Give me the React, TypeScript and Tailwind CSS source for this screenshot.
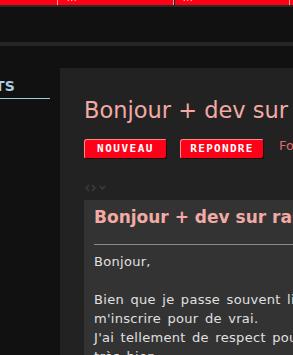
export default function App() {
  return (
    <div className="w-[293px] h-[355px] overflow-hidden bg-[#121112] font-['DejaVu_Sans',sans-serif]">
      {/* Top nav */}
      <div className="h-[5px] bg-[#ff0016] flex relative">
        <div className="w-[58px] border-r border-[#f4a0a0]" />
        <div className="w-[116px] border-r border-[#f4a0a0] relative">
          <span className="absolute left-[9px] -top-[5px] text-[8px] leading-[8px] text-white tracking-[1px]">...</span>
        </div>
        <div className="w-[1px] bg-[#1a1a1a]" />
        <div className="w-[115px] border-r border-[#f4a0a0] relative">
          <span className="absolute left-[8px] -top-[5px] text-[8px] leading-[8px] text-white tracking-[1px]">...</span>
        </div>
      </div>
      <div className="h-[2px] bg-[#2b2b2b]" />
      <div className="h-[35px]" />
      <div className="h-[4px] bg-[#262626]" />
      <div className="h-[22px]" />

      <div className="flex">
        {/* Sidebar */}
        <div className="w-[60px] shrink-0 pt-[10px] bg-[#111111] h-[300px]">
          <div className="border-b border-[#9ccbe6] w-[50px] pb-[3px] overflow-hidden">
            <div className="text-[14px] leading-[17px] font-bold text-[#a9cde2] -ml-[37px] whitespace-nowrap">
              VENTS
            </div>
          </div>
        </div>

        {/* Main */}
        <div className="flex-1 min-w-0 bg-[#222222] pl-[24px] pt-[27px] overflow-hidden">
          <h1 className="text-[22.5px] leading-[30px] text-[#f2aaa4] whitespace-nowrap">
            Bonjour + dev sur raspberry
          </h1>
          <div className="flex items-start mt-[14px] whitespace-nowrap">
            <button className="shrink-0 w-[83px] h-[20px] bg-[#ff0019] rounded-[3px] border border-t-[#ff8a8a] border-l-[#ff8a8a] border-b-[#250000] border-r-[#250000] text-white font-['DejaVu_Sans_Mono',monospace] font-bold text-[11px] leading-[18px] tracking-[1.5px] flex items-center justify-center">
              NOUVEAU
            </button>
            <button className="shrink-0 ml-[13px] w-[84px] h-[20px] bg-[#ff0019] rounded-[3px] border border-t-[#ff8a8a] border-l-[#ff8a8a] border-b-[#250000] border-r-[#250000] text-white font-['DejaVu_Sans_Mono',monospace] font-bold text-[11px] leading-[18px] tracking-[1.3px] flex items-center justify-center">
              REPONDRE
            </button>
            <span className="shrink-0 ml-[15px] text-[13px] leading-[16px] text-[#e06a6a] -mt-[1px]">Forum</span>
          </div>
          <div className="mt-[24px] h-[10px] flex items-center">
            <svg width="24" height="8" viewBox="0 0 24 8" fill="none" stroke="#3c3c3c" strokeWidth="1.5">
              <path d="M5 1 L2 4 L5 7" />
              <path d="M8 1 L11 4 L8 7" />
              <path d="M16 2 L18.5 5 L21 2" />
            </svg>
          </div>
          <div className="mt-[7px] bg-[#333333] pl-[10px] pt-[5px] whitespace-nowrap">
            <div className="text-[17px] leading-[24px] font-bold text-[#f2aaa4]">
              Bonjour + dev sur raspberry
            </div>
            <div className="mt-[15px] border-t border-[#8a8a8a]" />
            <div className="pt-[7px] text-[13px] leading-[19px] tracking-[0.3px] [word-spacing:2px] text-[#e0e0e0]">
              <div>Bonjour,</div>
              <div className="h-[19px]" />
              <div>Bien que je passe souvent lire le forum</div>
              <div>m'inscrire pour de vrai.</div>
              <div>J'ai tellement de respect pour tous</div>
              <div>très bien.</div>
            </div>
          </div>
        </div>
      </div>
    </div>
  );
}
